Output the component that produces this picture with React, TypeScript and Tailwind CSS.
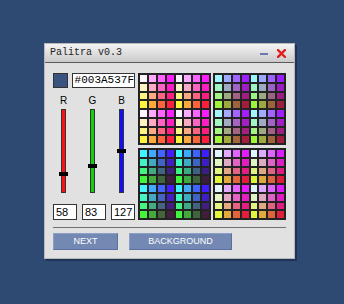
import React from "react";

// ── Palette data ──────────────────────────────────────────────────

const G_COLS = [245, 170, 100, 30];
const B_ROWS = [255, 195, 130, 60];

// red level for each 4x4 block, per quadrant [tl, tr, bl, br]
const QUADRANT_R = [
  [255, 250, 255, 250],
  [160, 155, 165, 160],
  [64, 60, 68, 64],
  [225, 220, 228, 222],
];

const hex = (n: number) => n.toString(16).padStart(2, "0");

function cellColor(q: number, row: number, col: number) {
  const block = (row >= 4 ? 2 : 0) + (col >= 4 ? 1 : 0);
  const r = QUADRANT_R[q][block];
  const g = G_COLS[col % 4];
  const b = B_ROWS[row % 4];
  return `#${hex(r)}${hex(g)}${hex(b)}`;
}

// ── Pieces ────────────────────────────────────────────────────────

function Quadrant({ q }: { q: number }) {
  const cells = [];
  for (let row = 0; row < 8; row++) {
    for (let col = 0; col < 8; col++) {
      cells.push(
        <div key={`${row}-${col}`} style={{ background: cellColor(q, row, col) }} />,
      );
    }
  }
  return (
    <div className="grid h-[72px] w-[73px] grid-cols-8 grid-rows-8 gap-[2px] bg-[#222222] p-[2px]">
      {cells}
    </div>
  );
}

function Slider({ label, value, fill }: { label: string; value: number; fill: string }) {
  const top = Math.round((1 - value / 255) * 84);
  return (
    <div className="flex w-[24px] flex-col items-center pr-[3px]">
      <span className="h-[12px] text-[10px] leading-[12px] text-black">{label}</span>
      <div className="relative mt-[2px] h-[84px] w-[5px] border border-[#333333]" style={{ background: fill }}>
        <div
          className="absolute left-[-3px] h-[4px] w-[9px] bg-black"
          style={{ top: top - 3 }}
        />
      </div>
    </div>
  );
}

function ValueBox({ value }: { value: number }) {
  return (
    <div className="h-[16px] w-[24px] border border-[#333333] bg-white pl-[2px] text-[11px] leading-[14px] text-black">
      {value}
    </div>
  );
}

// ── App ──────────────────────────────────────────────────────────

export default function App() {
  return (
    <div
      className="h-[304px] w-[344px] bg-[#2e4a72] pl-[44px] pt-[43px]"
      style={{ fontFamily: '"Liberation Sans", Arial, sans-serif' }}
    >
      <div className="w-[251px] border border-[#b8b8b8] bg-[#e1e1e1] shadow-[2px_2px_0_#1f3455]">
        {/* Title bar */}
        <div className="flex h-[19px] items-center justify-between border-b border-[#5a5a5a] bg-gradient-to-b from-[#f4f4f4] to-[#cacaca] pl-[5px] pr-[8px]">
          <span
            className="text-[10px] leading-none text-[#222222]"
            style={{ fontFamily: '"Liberation Mono", monospace' }}
          >
            Palitra v0.3
          </span>
          <div className="flex items-center gap-[9px]">
            <div className="mt-[1px] h-[2px] w-[8px] bg-[#6a7ab4]" />
            <svg width="9" height="9" viewBox="0 0 9 9">
              <path d="M1 1 L8 8 M8 1 L1 8" stroke="#e02020" strokeWidth="2.4" strokeLinecap="square" />
            </svg>
          </div>
        </div>

        {/* Body */}
        <div className="px-[8px] pb-[8px] pt-[10px]">
          <div className="flex gap-[3px]">
            {/* Left column */}
            <div className="flex w-[82px] flex-col">
              <div className="flex h-[15px] items-center gap-[4px]">
                <div className="h-[15px] w-[15px] border border-[#333333] bg-[#3a537f]" />
                <div
                  className="h-[15px] flex-1 border border-[#333333] bg-white pl-[2px] text-[11px] leading-[13px] text-black"
                  style={{ fontFamily: '"Liberation Mono", monospace' }}
                >
                  #003A537F
                </div>
              </div>

              <div className="mt-[7px] flex justify-between">
                <Slider label="R" value={58} fill="#ff1010" />
                <Slider label="G" value={83} fill="#10d010" />
                <Slider label="B" value={127} fill="#1010ff" />
              </div>

              <div className="mt-[11px] flex justify-between">
                <ValueBox value={58} />
                <ValueBox value={83} />
                <ValueBox value={127} />
              </div>
            </div>

            {/* Palette */}
            <div className="grid grid-cols-2 gap-x-[2px] gap-y-[3px]">
              <Quadrant q={0} />
              <Quadrant q={1} />
              <Quadrant q={2} />
              <Quadrant q={3} />
            </div>
          </div>

          <div className="mt-[7px] h-[1px] bg-[#707070]" />

          <div className="mt-[5px] flex gap-[11px]">
            <button className="h-[17px] w-[65px] border border-[#8aa0c8] border-b-[#5a70a0] border-r-[#5a70a0] bg-[#7389b3] text-[9px] leading-none text-white">
              NEXT
            </button>
            <button className="h-[17px] w-[103px] border border-[#8aa0c8] border-b-[#5a70a0] border-r-[#5a70a0] bg-[#7389b3] text-[9px] leading-none text-white">
              BACKGROUND
            </button>
          </div>
        </div>
      </div>
    </div>
  );
}
